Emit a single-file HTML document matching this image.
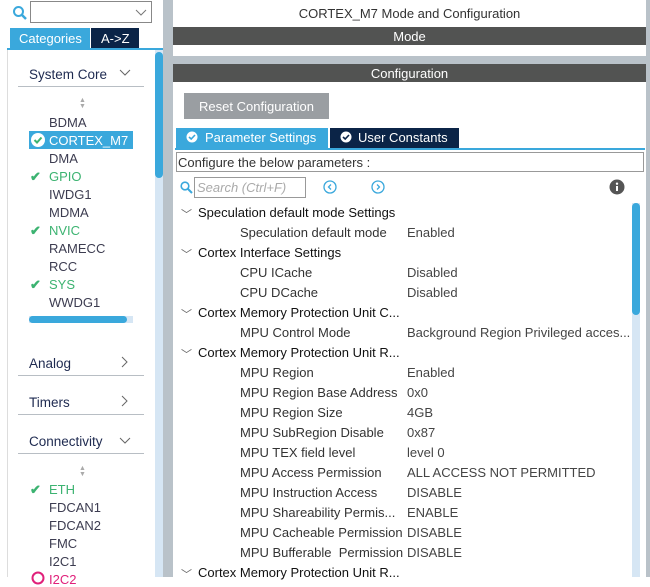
<!DOCTYPE html><html><head><style>
*{margin:0;padding:0;box-sizing:border-box}
body{width:650px;height:577px;overflow:hidden;background:#fff;font-family:"Liberation Sans",sans-serif;font-size:13px;color:#333;position:relative}
.a{position:absolute;white-space:nowrap}
.li{position:absolute;left:49px;font-size:13px;color:#3c3c50;margin-top:1px}
.g{color:#3cb371}
.ck{position:absolute;left:30px;color:#3cb371;font-size:13px;font-weight:bold;margin-top:1px}
.cat{position:absolute;left:29px;font-size:13.5px;color:#1e2a50;margin-top:1px}
.hl{position:absolute;left:18px;width:126px;height:1px;background:#b8bec4}
.r{position:absolute;left:198px;font-size:13px;color:#111;margin-top:1px}
.p{position:absolute;left:240px;font-size:13px;color:#333;margin-top:1px}
.v{position:absolute;left:407px;font-size:13px;color:#444;margin-top:1px}
.ch{position:absolute;left:181px;color:#666;font-size:11px;margin-top:1px}
</style></head><body>
<svg class="a" style="left:12px;top:5px" width="16" height="16"><circle cx="6.5" cy="6.5" r="4.5" fill="none" stroke="#3aa8dc" stroke-width="2"/><line x1="10" y1="10" x2="14" y2="14" stroke="#3aa8dc" stroke-width="2.5"/></svg>
<div class="a" style="left:30px;top:1px;width:122px;height:22px;border:1px solid #888"></div>
<svg class="a" style="left:135px;top:9px" width="12" height="8"><path d="M1 1L6 6L11 1" fill="none" stroke="#777"/></svg>
<div class="a" style="left:10px;top:28px;width:80px;height:20px;background:#3aa8dc;color:#fff;font-size:13px;padding:3px 0 0 9px">Categories</div>
<div class="a" style="left:91px;top:28px;width:48px;height:20px;background:#0b2447;color:#fff;font-size:13px;padding:3px 0 0 10px">A->Z</div>
<div class="a" style="left:7px;top:48px;width:156px;height:2px;background:#3aa8dc"></div>
<div class="a" style="left:7px;top:50px;width:1px;height:527px;background:#ddd"></div>
<div class="a" style="left:155px;top:50px;width:8px;height:527px;background:#d6e6f4"></div>
<div class="a" style="left:155px;top:52px;width:8px;height:126px;background:#3aa8dc;border-radius:4px"></div>
<div class="a" style="left:163px;top:0;width:10px;height:577px;background:#b9c2c9"></div>
<div class="cat" style="top:66px">System Core</div>
<svg class="a" style="left:119px;top:69px" width="12" height="8"><path d="M1 1L6 6L11 1" fill="none" stroke="#666"/></svg>
<div class="hl" style="top:86px"></div>
<div class="a" style="left:79px;top:98px;color:#aaa;font-size:7px;line-height:6px">▲<br>▼</div>
<div class="li" style="top:114px">BDMA</div>
<div class="a" style="left:29px;top:131px;width:104px;height:18px;background:#3aa8dc"></div>
<svg class="a" style="left:30px;top:132px" width="16" height="16"><circle cx="8" cy="8" r="7" fill="#fff"/><path d="M4.5 8L7 10.5L11.5 5.5" fill="none" stroke="#3cb371" stroke-width="2"/></svg>
<div class="li" style="top:132px;color:#fff">CORTEX_M7</div>
<div class="li" style="top:150px">DMA</div>
<div class="ck" style="top:168px">✔</div><div class="li g" style="top:168px">GPIO</div>
<div class="li" style="top:186px">IWDG1</div>
<div class="li" style="top:204px">MDMA</div>
<div class="ck" style="top:222px">✔</div><div class="li g" style="top:222px">NVIC</div>
<div class="li" style="top:240px">RAMECC</div>
<div class="li" style="top:258px">RCC</div>
<div class="ck" style="top:276px">✔</div><div class="li g" style="top:276px">SYS</div>
<div class="li" style="top:294px">WWDG1</div>
<div class="a" style="left:29px;top:316px;width:104px;height:7px;background:#d6e6f4"></div>
<div class="a" style="left:29px;top:316px;width:98px;height:7px;background:#3aa8dc;border-radius:4px"></div>
<div class="cat" style="top:355px">Analog</div>
<svg class="a" style="left:121px;top:356px" width="8" height="12"><path d="M1 1L6 6L1 11" fill="none" stroke="#666"/></svg>
<div class="hl" style="top:375px"></div>
<div class="cat" style="top:394px">Timers</div>
<svg class="a" style="left:121px;top:395px" width="8" height="12"><path d="M1 1L6 6L1 11" fill="none" stroke="#666"/></svg>
<div class="hl" style="top:414px"></div>
<div class="cat" style="top:433px">Connectivity</div>
<svg class="a" style="left:119px;top:437px" width="12" height="8"><path d="M1 1L6 6L11 1" fill="none" stroke="#666"/></svg>
<div class="hl" style="top:453px"></div>
<div class="a" style="left:79px;top:466px;color:#aaa;font-size:7px;line-height:6px">▲<br>▼</div>
<div class="ck" style="top:481px">✔</div><div class="li g" style="top:481px">ETH</div>
<div class="li" style="top:499px">FDCAN1</div>
<div class="li" style="top:517px">FDCAN2</div>
<div class="li" style="top:535px">FMC</div>
<div class="li" style="top:553px">I2C1</div>
<svg class="a" style="left:31px;top:571px" width="14" height="14"><circle cx="7" cy="7" r="5.5" fill="none" stroke="#e0207a" stroke-width="2"/></svg>
<div class="li" style="top:571px;color:#e0207a">I2C2</div>
<div class="a" style="left:646px;top:0;width:4px;height:577px;background:#b9c2c9"></div>
<div class="a" style="left:173px;top:6px;width:473px;text-align:center;font-size:13px;color:#333">CORTEX_M7 Mode and Configuration</div>
<div class="a" style="left:173px;top:27px;width:473px;height:18px;background:#525352;color:#fff;text-align:center;font-size:13px;line-height:19px">Mode</div>
<div class="a" style="left:173px;top:56px;width:473px;height:8px;background:#b9c2c9"></div>
<div class="a" style="left:173px;top:64px;width:473px;height:18px;background:#525352;color:#fff;text-align:center;font-size:13px;line-height:19px">Configuration</div>
<div class="a" style="left:184px;top:93px;width:145px;height:26px;background:#9a9ea2;color:#fff;font-size:13px;line-height:27px;text-align:center">Reset Configuration</div>
<div class="a" style="left:176px;top:128px;width:152px;height:20px;background:#3aa8dc;color:#fff;font-size:13px;line-height:20px;padding-left:29px">Parameter Settings</div>
<svg class="a" style="left:186px;top:131px" width="12" height="12"><circle cx="6" cy="6" r="5.5" fill="#fff"/><path d="M3 6L5.2 8L9 4" fill="none" stroke="#3aa8dc" stroke-width="1.6"/></svg>
<div class="a" style="left:330px;top:128px;width:129px;height:20px;background:#0b2447;color:#fff;font-size:13px;line-height:20px;padding-left:28px">User Constants</div>
<svg class="a" style="left:340px;top:131px" width="12" height="12"><circle cx="6" cy="6" r="5.5" fill="#fff"/><path d="M3 6L5.2 8L9 4" fill="none" stroke="#0b2447" stroke-width="1.6"/></svg>
<div class="a" style="left:175px;top:148px;width:470px;height:2px;background:#3aa8dc"></div>
<div class="a" style="left:176px;top:152px;width:468px;height:20px;border:1px solid #999;font-size:13px;line-height:19px;padding-left:1px;color:#333">Configure the below parameters :</div>
<svg class="a" style="left:180px;top:181px" width="13" height="13"><circle cx="5" cy="5" r="3.8" fill="none" stroke="#3aa8dc" stroke-width="1.6"/><line x1="8" y1="8" x2="12" y2="12" stroke="#3aa8dc" stroke-width="2"/></svg>
<div class="a" style="left:194px;top:177px;width:112px;height:21px;border:1px solid #999;font-style:italic;color:#aaa;font-size:13px;line-height:20px;padding-left:2px">Search (Ctrl+F)</div>
<svg class="a" style="left:323px;top:180px" width="14" height="14"><circle cx="7" cy="7" r="6" fill="none" stroke="#3aa8dc" stroke-width="1.3"/><path d="M8 4.5L5.5 7L8 9.5" fill="none" stroke="#3aa8dc" stroke-width="1.3"/></svg>
<svg class="a" style="left:371px;top:180px" width="14" height="14"><circle cx="7" cy="7" r="6" fill="none" stroke="#3aa8dc" stroke-width="1.3"/><path d="M6 4.5L8.5 7L6 9.5" fill="none" stroke="#3aa8dc" stroke-width="1.3"/></svg>
<svg class="a" style="left:609px;top:179px" width="16" height="16"><circle cx="8" cy="8" r="7.5" fill="#555"/><rect x="7" y="7" width="2" height="5" fill="#fff"/><circle cx="8" cy="4.7" r="1.2" fill="#fff"/></svg>
<div class="a" style="left:632px;top:203px;width:8px;height:374px;background:#d6e6f4"></div>
<div class="a" style="left:632px;top:203px;width:8px;height:112px;background:#3aa8dc;border-radius:4px"></div>
<div class="ch" style="top:205px">﹀</div><div class="r" style="top:204px">Speculation default mode Settings</div>
<div class="p" style="top:224px">Speculation default mode</div><div class="v" style="top:224px">Enabled</div>
<div class="ch" style="top:245px">﹀</div><div class="r" style="top:244px">Cortex Interface Settings</div>
<div class="p" style="top:264px">CPU ICache</div><div class="v" style="top:264px">Disabled</div>
<div class="p" style="top:284px">CPU DCache</div><div class="v" style="top:284px">Disabled</div>
<div class="ch" style="top:305px">﹀</div><div class="r" style="top:304px">Cortex Memory Protection Unit C...</div>
<div class="p" style="top:324px">MPU Control Mode</div><div class="v" style="top:324px">Background Region Privileged acces...</div>
<div class="ch" style="top:345px">﹀</div><div class="r" style="top:344px">Cortex Memory Protection Unit R...</div>
<div class="p" style="top:364px">MPU Region</div><div class="v" style="top:364px">Enabled</div>
<div class="p" style="top:384px">MPU Region Base Address</div><div class="v" style="top:384px">0x0</div>
<div class="p" style="top:404px">MPU Region Size</div><div class="v" style="top:404px">4GB</div>
<div class="p" style="top:424px">MPU SubRegion Disable</div><div class="v" style="top:424px">0x87</div>
<div class="p" style="top:444px">MPU TEX field level</div><div class="v" style="top:444px">level 0</div>
<div class="p" style="top:464px">MPU Access Permission</div><div class="v" style="top:464px">ALL ACCESS NOT PERMITTED</div>
<div class="p" style="top:484px">MPU Instruction Access</div><div class="v" style="top:484px">DISABLE</div>
<div class="p" style="top:504px">MPU Shareability Permis...</div><div class="v" style="top:504px">ENABLE</div>
<div class="p" style="top:524px">MPU Cacheable Permission</div><div class="v" style="top:524px">DISABLE</div>
<div class="p" style="top:544px">MPU Bufferable&nbsp; Permission</div><div class="v" style="top:544px">DISABLE</div>
<div class="ch" style="top:565px">﹀</div><div class="r" style="top:564px">Cortex Memory Protection Unit R...</div>
</body></html>
